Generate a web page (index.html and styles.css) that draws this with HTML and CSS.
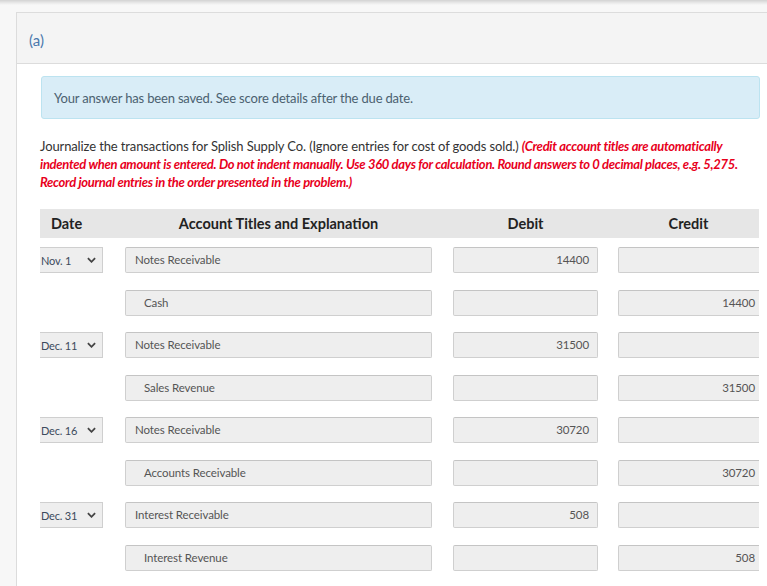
FILE: index.html
```html
<!DOCTYPE html>
<html>
<head>
<meta charset="utf-8">
<link rel="stylesheet" href="styles.css">
</head>
<body>
<div class="topbar"></div>
<div class="page">
  <div class="panel">
    <div class="panel-head">(a)</div>
    <div class="panel-body">
      <div class="alert">Your answer has been saved. See score details after the due date.</div>
      <p class="instr">Journalize the transactions for Splish Supply Co. (Ignore entries for cost of goods sold.) <em>(Credit account titles are automatically indented when amount is entered. Do not indent manually. Use 360 days for calculation. Round answers to 0 decimal places, e.g. 5,275. Record journal entries in the order presented in the problem.)</em></p>
      <div class="journal">
        <div class="jhead">
          <div class="h-date">Date</div>
          <div class="h-center">Account Titles and Explanation</div>
          <div class="h-center h-gap"></div>
          <div class="h-center">Debit</div>
          <div class="h-center h-gap"></div>
          <div class="h-center">Credit</div>
        </div>

        <div class="jrow">
          <div class="date"><span>Nov. 1</span><svg class="chev" viewBox="0 0 10 6"><polyline points="1,1 5,5 9,1"/></svg></div>
          <div class="field">Notes Receivable</div><div></div>
          <div class="field num">14400</div><div></div>
          <div class="field num"></div>
        </div>
        <div class="jrow">
          <div></div>
          <div class="field indent">Cash</div><div></div>
          <div class="field num"></div><div></div>
          <div class="field num">14400</div>
        </div>

        <div class="jrow">
          <div class="date"><span>Dec. 11</span><svg class="chev" viewBox="0 0 10 6"><polyline points="1,1 5,5 9,1"/></svg></div>
          <div class="field">Notes Receivable</div><div></div>
          <div class="field num">31500</div><div></div>
          <div class="field num"></div>
        </div>
        <div class="jrow">
          <div></div>
          <div class="field indent">Sales Revenue</div><div></div>
          <div class="field num"></div><div></div>
          <div class="field num">31500</div>
        </div>

        <div class="jrow">
          <div class="date"><span>Dec. 16</span><svg class="chev" viewBox="0 0 10 6"><polyline points="1,1 5,5 9,1"/></svg></div>
          <div class="field">Notes Receivable</div><div></div>
          <div class="field num">30720</div><div></div>
          <div class="field num"></div>
        </div>
        <div class="jrow">
          <div></div>
          <div class="field indent">Accounts Receivable</div><div></div>
          <div class="field num"></div><div></div>
          <div class="field num">30720</div>
        </div>

        <div class="jrow">
          <div class="date"><span>Dec. 31</span><svg class="chev" viewBox="0 0 10 6"><polyline points="1,1 5,5 9,1"/></svg></div>
          <div class="field">Interest Receivable</div><div></div>
          <div class="field num">508</div><div></div>
          <div class="field num"></div>
        </div>
        <div class="jrow">
          <div></div>
          <div class="field indent">Interest Revenue</div><div></div>
          <div class="field num"></div><div></div>
          <div class="field num">508</div>
        </div>
      </div>
    </div>
  </div>
</div>
</body>
</html>
```

FILE: styles.css
```css
html, body {
  margin: 0;
  padding: 0;
  background: #f7f7f7;
  font-family: Lato, "Open Sans", sans-serif;
  overflow: hidden;
}
.topbar {
  height: 5px;
  background: linear-gradient(to bottom, #d2d2d2 0%, #e6e6e6 50%, #f7f7f7 100%);
}
.page {
  padding: 7px 0 0 16px;
}
.panel {
  width: 800px;
  border: 1px solid #dcdcdc;
  border-right: none;
  background: #fff;
  height: 700px;
}
.panel-head {
  height: 51px;
  background: #f4f4f4;
  border-bottom: 1px solid #dcdcdc;
  box-sizing: border-box;
  padding: 17px 0 0 12px;
  font-size: 15px;
  color: #4a78ad;
  line-height: 20px;
}
.panel-body {
  padding: 12px 0 0 23px;
  width: 720px;
}
.alert {
  margin-left: 1px;
  height: 43px;
  box-sizing: border-box;
  background: #d9edf7;
  border: 1px solid #bce3f0;
  border-radius: 3px;
  padding: 0 0 0 12px;
  line-height: 42px;
  font-size: 13px;
  letter-spacing: -0.17px;
  color: #4b6170;
}
.instr {
  margin: 18px 0 0 0;
  font-size: 13px;
  line-height: 18px;
  color: #333;
  letter-spacing: -0.12px;
}
.instr em {
  color: #e8001c;
  font-weight: bold;
  font-style: italic;
  letter-spacing: -0.3px;
}
.journal {
  margin-top: 18px;
  width: 719px;
}
.jhead, .jrow {
  display: grid;
  grid-template-columns: 85px 307px 21px 145px 20px 141px;
}
.jhead {
  height: 29px;
  background: #e6e6e6;
  font-weight: bold;
  font-size: 14.5px;
  color: #222;
  line-height: 29px;
  margin-bottom: 9px;
}
.h-date {
  padding-left: 11px;
}
.h-center {
  text-align: center;
}
.jrow {
  height: 26px;
  margin-bottom: 16.5px;
}
.field {
  box-sizing: border-box;
  height: 26px;
  background: #eeeeee;
  border: 1px solid #cfcfcf;
  border-top-color: #c4c4c4;
  border-radius: 2px;
  font-size: 11.5px;
  color: #555;
  line-height: 24px;
  padding-left: 9px;
  letter-spacing: -0.1px;
  white-space: nowrap;
}
.field.indent {
  padding-left: 18px;
}
.field.num {
  text-align: right;
  padding: 0 8px 0 0;
}
.jrow > .field:last-child {
  border-right: none;
  border-radius: 2px 0 0 2px;
  padding-right: 4px;
}
.date {
  width: 63px;
  height: 26px;
  box-sizing: border-box;
  background: #eeeeee;
  border: 1px solid #cfcfcf;
  border-left: none;
  display: flex;
  align-items: center;
  justify-content: space-between;
  padding: 0 6px 0 1px;
  font-size: 11px;
  color: #3c4a5c;
  letter-spacing: -0.2px;
}
.chev {
  width: 9px;
  height: 6px;
}
.chev polyline {
  fill: none;
  stroke: #444;
  stroke-width: 2;
}
```
